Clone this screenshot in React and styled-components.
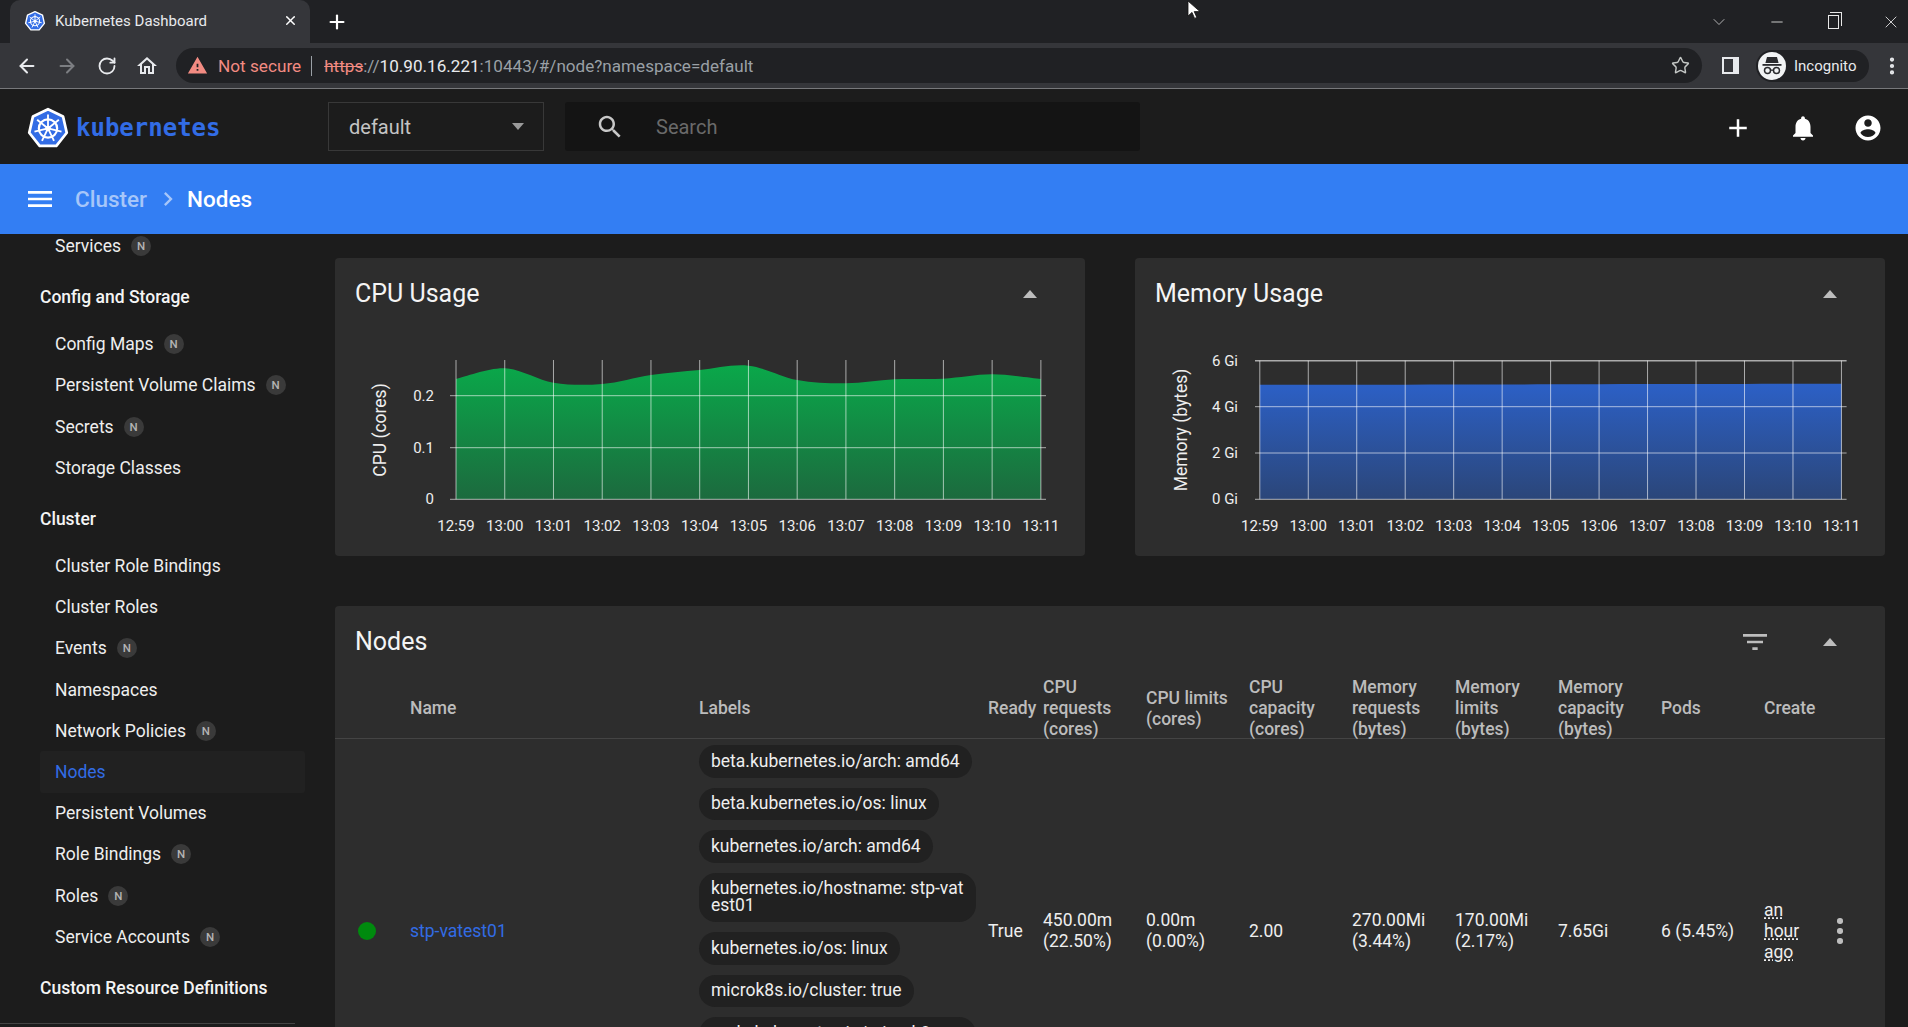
import styled, { createGlobalStyle } from 'styled-components';
import { ArrowLeft, ArrowRight, RotateCw, Star, ChevronDown, Minus, X, Plus, MoreVertical } from 'lucide-react';

const GlobalStyle = createGlobalStyle`
    html, body {
        margin: 0;
        height: 100%;
        background: #1c1c1c;
        font-family: Roboto, "Liberation Sans", sans-serif;
    }
    * {
        box-sizing: border-box;
    }
`;

const icons = {
    menu: 'M3 18h18v-2H3v2zm0-5h18v-2H3v2zm0-7v2h18V6H3z',
    add: 'M19 13h-6v6h-2v-6H5v-2h6V5h2v6h6v2z',
    bell: 'M12 22c1.1 0 2-.9 2-2h-4c0 1.1.89 2 2 2zm6-6v-5c0-3.07-1.64-5.64-4.5-6.32V4c0-.83-.67-1.5-1.5-1.5s-1.5.67-1.5 1.5v.68C7.63 5.36 6 7.92 6 11v5l-2 2v1h16v-1l-2-2z',
    account: 'M12 2C6.48 2 2 6.48 2 12s4.48 10 10 10 10-4.48 10-10S17.52 2 12 2zm0 3c1.66 0 3 1.34 3 3s-1.34 3-3 3-3-1.34-3-3 1.34-3 3-3zm0 14.2c-2.5 0-4.71-1.28-6-3.22.03-1.99 4-3.08 6-3.08 1.99 0 5.97 1.09 6 3.08-1.29 1.94-3.5 3.22-6 3.22z',
    search: 'M15.5 14h-.79l-.28-.27C15.41 12.59 16 11.11 16 9.5 16 5.91 13.09 3 9.5 3S3 5.91 3 9.5 5.91 16 9.5 16c1.61 0 3.09-.59 4.23-1.57l.27.28v.79l5 4.99L20.49 19l-4.99-5zm-6 0C7.01 14 5 11.99 5 9.5S7.01 5 9.5 5 14 7.01 14 9.5 11.99 14 9.5 14z',
    filter: 'M10 18h4v-2h-4v2zM3 6v2h18V6H3zm3 7h12v-2H6v2z',
    home: 'M12 5.69l5 4.5V18h-2v-6H9v6H7v-7.81l5-4.5M12 3L2 12h3v8h6v-6h2v6h6v-8h3L12 3z',
    chevron: 'M8.59 16.59L13.17 12 8.59 7.41 10 6l6 6-6 6z',
    warning: 'M1 21h22L12 2 1 21zm12-3h-2v-2h2v2zm0-4h-2v-4h2v4z',
};

function MatIcon({ name, size = 24, color = '#fff' }) {
    return (
        <svg width={size} height={size} viewBox="0 0 24 24" fill={color}>
            <path d={icons[name]} />
        </svg>
    );
}

function K8sLogo({ size }) {
    const pts = [0, 1, 2, 3, 4, 5, 6].map((k) => {
        const a = (-90 + (k * 360) / 7) * (Math.PI / 180);
        return [24 + 21 * Math.cos(a), 24.5 + 21 * Math.sin(a)];
    });
    return (
        <svg width={size} height={size} viewBox="0 0 48 48">
            <polygon points={pts.map((p) => p.join(',')).join(' ')} fill="#326ce5" stroke="#fff" strokeWidth="3" strokeLinejoin="round" />
            <circle cx="24" cy="24.5" r="10" fill="none" stroke="#fff" strokeWidth="2.4" />
            {pts.map((p, i) => (
                <line key={i} x1="24" y1="24.5" x2={24 + (p[0] - 24) * 0.72} y2={24.5 + (p[1] - 24.5) * 0.72} stroke="#fff" strokeWidth="2" />
            ))}
            <circle cx="24" cy="24.5" r="3" fill="#fff" />
        </svg>
    );
}

const smooth = (p) => {
    let d = `M${p[0][0]} ${p[0][1]}`;
    for (let i = 0; i < p.length - 1; i++) {
        const a = p[i - 1] || p[i];
        const b = p[i];
        const c = p[i + 1];
        const e = p[i + 2] || c;
        d += ` C${b[0] + (c[0] - a[0]) / 6} ${b[1] + (c[1] - a[1]) / 6} ${c[0] - (e[0] - b[0]) / 6} ${c[1] - (e[1] - b[1]) / 6} ${c[0]} ${c[1]}`;
    }
    return d;
};

const times = ['12:59', '13:00', '13:01', '13:02', '13:03', '13:04', '13:05', '13:06', '13:07', '13:08', '13:09', '13:10', '13:11'];

function Chart({ id, view, left, step, top, bottom, tickLeft, tickRight, labelEnd, axisX, axis, yTicks, values, from, to }) {
    const points = values.map((y, i) => [left + i * step, y]);
    const right = left + 12 * step;
    return (
        <ChartSvg viewBox={view} width="750" height="216">
            <defs>
                <linearGradient id={id} x1="0" y1="0" x2="0" y2="1">
                    <stop offset="0" stopColor={from} />
                    <stop offset="1" stopColor={to} />
                </linearGradient>
            </defs>
            <path d={`${smooth(points)} L${right} ${bottom} L${left} ${bottom} Z`} fill={`url(#${id})`} />
            {times.map((t, i) => (
                <g key={t}>
                    <line x1={left + i * step} x2={left + i * step} y1={top} y2={bottom} stroke="#fff" strokeOpacity="0.6" strokeWidth="1" />
                    <text x={left + i * step} y="531" fontSize="15" fill="#eee" textAnchor="middle">{t}</text>
                </g>
            ))}
            {yTicks.map((t) => (
                <g key={t.label}>
                    <line x1={tickLeft} x2={tickRight} y1={t.y} y2={t.y} stroke="#fff" strokeOpacity="0.6" strokeWidth={t.strong ? 1.6 : 1} />
                    <text x={labelEnd} y={t.y + 5} fontSize="15" fill="#eee" textAnchor="end">{t.label}</text>
                </g>
            ))}
            <text transform={`translate(${axisX} 430) rotate(-90)`} fontSize="17.5" fill="#eee" textAnchor="middle">{axis}</text>
        </ChartSvg>
    );
}

const sidebar = [
    { text: 'Services', ns: true },
    { head: 'Config and Storage' },
    { text: 'Config Maps', ns: true },
    { text: 'Persistent Volume Claims', ns: true },
    { text: 'Secrets', ns: true },
    { text: 'Storage Classes' },
    { head: 'Cluster' },
    { text: 'Cluster Role Bindings' },
    { text: 'Cluster Roles' },
    { text: 'Events', ns: true },
    { text: 'Namespaces' },
    { text: 'Network Policies', ns: true },
    { text: 'Nodes', active: true },
    { text: 'Persistent Volumes' },
    { text: 'Role Bindings', ns: true },
    { text: 'Roles', ns: true },
    { text: 'Service Accounts', ns: true },
    { head: 'Custom Resource Definitions' },
];

const labels = [
    'beta.kubernetes.io/arch: amd64',
    'beta.kubernetes.io/os: linux',
    'kubernetes.io/arch: amd64',
    'kubernetes.io/hostname: stp-vatest01',
    'kubernetes.io/os: linux',
    'microk8s.io/cluster: true',
    'node.kubernetes.io/microk8s-worker: microk8s-worker',
];

const headers = ['', 'Name', 'Labels', 'Ready', 'CPU requests (cores)', 'CPU limits (cores)', 'CPU capacity (cores)', 'Memory requests (bytes)', 'Memory limits (bytes)', 'Memory capacity (bytes)', 'Pods', 'Create', ''];

const values = ['450.00m (22.50%)', '0.00m (0.00%)', '2.00', '270.00Mi (3.44%)', '170.00Mi (2.17%)', '7.65Gi', '6 (5.45%)'];

function App() {
    return (
        <Page>
            <GlobalStyle />
            <TabStrip>
                <Tab>
                    <K8sLogo size={22} />
                    <TabTitle>Kubernetes Dashboard</TabTitle>
                    <X size={15} color="#fff" strokeWidth={2.4} />
                </Tab>
                <NewTab><Plus size={22} color="#fff" strokeWidth={2.4} /></NewTab>
                <Cursor width="14" height="20" viewBox="0 0 14 20">
                    <path d="M1 1v15l4-3.6 2.6 6 2.2-1-2.6-5.8H13z" fill="#fff" stroke="#111" strokeWidth="0.8" />
                </Cursor>
                <WindowButtons>
                    <ChevronDown size={20} color="#ccc" strokeWidth={1} />
                    <Minus size={18} color="#ddd" strokeWidth={1.2} />
                    <RestoreIcon />
                    <X size={20} color="#ddd" strokeWidth={1.1} />
                </WindowButtons>
            </TabStrip>
            <ToolBar>
                <NavButtons>
                    <ArrowLeft size={22} color="#e8eaed" strokeWidth={2.2} />
                    <ArrowRight size={22} color="#7c7e82" strokeWidth={2.2} />
                    <RotateCw size={20} color="#e8eaed" strokeWidth={2.2} />
                    <MatIcon name="home" size={24} color="#e8eaed" />
                </NavButtons>
                <AddressBar>
                    <MatIcon name="warning" size={21} color="#f28b82" />
                    <NotSecure>Not secure</NotSecure>
                    <UrlDivider />
                    <Url>
                        <Https>https</Https>://<Host>10.90.16.221</Host>:10443/#/node?namespace=default
                    </Url>
                    <BookmarkStar><Star size={19} color="#c4c7c5" strokeWidth={1.8} /></BookmarkStar>
                </AddressBar>
                <SidePanelIcon />
                <ProfilePill>
                    <IncognitoBadge>
                        <svg width="22" height="20" viewBox="0 0 22 20" fill="#2a2b2e">
                            <path d="M6 1h10l1.6 6H4.4z" />
                            <rect x="1.5" y="8" width="19" height="1.8" />
                            <circle cx="6.5" cy="14.5" r="3" fill="none" stroke="#2a2b2e" strokeWidth="1.5" />
                            <circle cx="15.5" cy="14.5" r="3" fill="none" stroke="#2a2b2e" strokeWidth="1.5" />
                            <rect x="9.5" y="13.5" width="3" height="1.3" />
                        </svg>
                    </IncognitoBadge>
                    Incognito
                </ProfilePill>
                <MoreVertical size={22} color="#e8eaed" strokeWidth={2.6} />
            </ToolBar>
            <Header>
                <Brand>
                    <K8sLogo size={44} />
                    <BrandName>kubernetes</BrandName>
                </Brand>
                <NamespaceSelect>
                    <span>default</span>
                    <SelectCaret />
                </NamespaceSelect>
                <SearchBox>
                    <MatIcon name="search" size={30} color="#c8c8c8" />
                    <SearchText>Search</SearchText>
                </SearchBox>
                <HeaderActions>
                    <MatIcon name="add" size={30} />
                    <MatIcon name="bell" size={30} />
                    <MatIcon name="account" size={30} />
                </HeaderActions>
            </Header>
            <TitleBar>
                <MatIcon name="menu" size={32} />
                <Crumb>Cluster</Crumb>
                <MatIcon name="chevron" size={28} color="#a6c6f9" />
                <Crumb $current>Nodes</Crumb>
            </TitleBar>
            <Body>
                <Sidebar>
                    <NavList>
                        {sidebar.map((item) =>
                            item.head ? (
                                <NavHead key={item.head}>{item.head}</NavHead>
                            ) : (
                                <NavItem key={item.text} $active={item.active}>
                                    {item.text}
                                    {item.ns && <NsBadge>N</NsBadge>}
                                </NavItem>
                            )
                        )}
                    </NavList>
                    <NavDivider />
                </Sidebar>
                <Main>
                    <ChartRow>
                        <Card>
                            <CardHeader>
                                <CardTitle>CPU Usage</CardTitle>
                                <CardTools><Caret /></CardTools>
                            </CardHeader>
                            <Chart
                                id="cpu"
                                view="335 340 750 216"
                                left={456}
                                step={48.74}
                                top={360}
                                bottom={499.3}
                                tickLeft={450}
                                tickRight={1046}
                                labelEnd={434}
                                axisX={385.5}
                                axis="CPU (cores)"
                                from="#0aa84a"
                                to="#1c6a3e"
                                yTicks={[
                                    { label: '0.2', y: 395.7 },
                                    { label: '0.1', y: 447.7 },
                                    { label: '0', y: 499.3 },
                                ]}
                                values={[379, 368.3, 382.7, 384, 375, 370, 365.7, 380, 383.3, 379.3, 378.7, 374.3, 379]}
                            />
                        </Card>
                        <Card>
                            <CardHeader>
                                <CardTitle>Memory Usage</CardTitle>
                                <CardTools><Caret /></CardTools>
                            </CardHeader>
                            <Chart
                                id="memory"
                                view="1135 340 750 216"
                                left={1259.8}
                                step={48.47}
                                top={360.7}
                                bottom={499.3}
                                tickLeft={1255}
                                tickRight={1846.6}
                                labelEnd={1238}
                                axisX={1186.5}
                                axis="Memory (bytes)"
                                from="#2c60c6"
                                to="#2b4679"
                                yTicks={[
                                    { label: '6 Gi', y: 360.7, strong: true },
                                    { label: '4 Gi', y: 406.7 },
                                    { label: '2 Gi', y: 453 },
                                    { label: '0 Gi', y: 499.3 },
                                ]}
                                values={[384.7, 384.7, 384.7, 384.7, 384.6, 384.5, 384.3, 384.2, 384, 384, 384, 383.8, 383.7]}
                            />
                        </Card>
                    </ChartRow>
                    <NodesCard>
                        <CardHeader>
                            <CardTitle>Nodes</CardTitle>
                            <CardTools>
                                <MatIcon name="filter" size={32} color="#bdbdbd" />
                                <Caret />
                            </CardTools>
                        </CardHeader>
                        <TableHead>
                            {headers.map((h, i) => (
                                <HeadCell key={i}>{h}</HeadCell>
                            ))}
                        </TableHead>
                        <TableRow>
                            <Cell><StatusDot /></Cell>
                            <Cell><NodeLink>stp-vatest01</NodeLink></Cell>
                            <LabelCell>
                                {labels.map((l) => (
                                    <Chip key={l}>{l}</Chip>
                                ))}
                            </LabelCell>
                            <Cell>True</Cell>
                            {values.map((v) => (
                                <Cell key={v}>{v}</Cell>
                            ))}
                            <Cell><Age>an hour ago</Age></Cell>
                            <Cell><Kebab><span /><span /><span /></Kebab></Cell>
                        </TableRow>
                    </NodesCard>
                </Main>
            </Body>
        </Page>
    );
}

const Page = styled.div`
    height: 100vh;
    display: flex;
    flex-direction: column;
    overflow: hidden;
    background: #1c1c1c;
`;

const TabStrip = styled.div`
    position: relative;
    height: 43px;
    flex: none;
    display: flex;
    align-items: flex-end;
    padding-left: 10px;
    background: #202124;
`;

const Tab = styled.div`
    width: 300px;
    height: 43px;
    display: flex;
    align-items: center;
    padding: 0 12px 2px 14px;
    background: #35363a;
    border-radius: 10px 10px 0 0;
    color: #e8eaed;
`;

const TabTitle = styled.span`
    flex: 1;
    margin-left: 9px;
    font-size: 15px;
`;

const NewTab = styled.div`
    display: flex;
    align-self: center;
    margin-left: 16px;
`;

const Cursor = styled.svg`
    position: absolute;
    left: 1187px;
    top: 0;
`;

const WindowButtons = styled.div`
    margin-left: auto;
    align-self: center;
    padding-right: 7px;
    display: flex;
    align-items: center;
    gap: 42px;
    svg:first-child {
        margin-right: -3px;
    }
`;

const RestoreIcon = styled.span`
    position: relative;
    width: 11px;
    height: 14px;
    border: 1.3px solid #e8e8e8;
    &::before {
        content: '';
        position: absolute;
        left: 1px;
        top: -4px;
        width: 11px;
        height: 13px;
        border-top: 1.3px solid #e8e8e8;
        border-right: 1.3px solid #e8e8e8;
    }
`;

const ToolBar = styled.div`
    height: 46px;
    flex: none;
    display: flex;
    align-items: center;
    padding-right: 5px;
    background: #35363a;
    border-bottom: 1px solid #77787b;
`;

const NavButtons = styled.div`
    width: 176px;
    padding: 0 17px 0 16px;
    display: flex;
    justify-content: space-between;
    align-items: center;
`;

const AddressBar = styled.div`
    width: 1526px;
    height: 35px;
    display: flex;
    align-items: center;
    padding: 0 12px 0 11px;
    background: #202124;
    border-radius: 18px;
    font-size: 17.1px;
`;

const NotSecure = styled.span`
    margin-left: 10px;
    color: #f28b82;
    font-size: 17.2px;
`;

const UrlDivider = styled.span`
    width: 1px;
    height: 20px;
    margin: 0 12px 0 10px;
    background: #9aa0a6;
`;

const Url = styled.span`
    color: #9aa0a6;
`;

const Https = styled.span`
    color: #f28b82;
    text-decoration: line-through;
`;

const Host = styled.span`
    color: #e8eaed;
`;

const BookmarkStar = styled.span`
    display: flex;
    margin-left: auto;
`;

const SidePanelIcon = styled.span`
    width: 17px;
    height: 17px;
    margin-left: 20px;
    border: 2px solid #e8eaed;
    border-right-width: 6px;
`;

const ProfilePill = styled.div`
    width: 113px;
    height: 32px;
    margin: 0 12px 0 17px;
    display: flex;
    align-items: center;
    gap: 8px;
    background: #202124;
    border-radius: 16px;
    color: #e8eaed;
    font-size: 15px;
`;

const IncognitoBadge = styled.span`
    width: 28px;
    height: 28px;
    margin-left: 2px;
    display: flex;
    align-items: center;
    justify-content: center;
    background: #f1f3f4;
    border-radius: 50%;
`;

const Header = styled.header`
    height: 75px;
    flex: none;
    display: flex;
    align-items: center;
    background: #1c1c1c;
`;

const Brand = styled.div`
    width: 328px;
    padding: 2px 0 0 26px;
    display: flex;
    align-items: center;
    gap: 6px;
`;

const BrandName = styled.span`
    font-family: "DejaVu Sans Mono", monospace;
    font-size: 24px;
    font-weight: 700;
    color: #326ce5;
`;

const NamespaceSelect = styled.div`
    width: 216px;
    height: 49px;
    display: flex;
    align-items: center;
    justify-content: space-between;
    padding: 0 19px 0 20px;
    border: 1px solid #383838;
    color: #c4c4c4;
    font-size: 20px;
`;

const SelectCaret = styled.span`
    border: 6px solid transparent;
    border-top: 7px solid #9a9a9a;
    border-bottom: 0;
`;

const SearchBox = styled.div`
    width: 575px;
    height: 49px;
    margin-left: 21px;
    display: flex;
    align-items: center;
    gap: 31px;
    padding-left: 30px;
    background: #141414;
    border-radius: 3px;
`;

const SearchText = styled.span`
    color: #6a6a6a;
    font-size: 20px;
`;

const HeaderActions = styled.div`
    margin-left: auto;
    padding: 2px 25px 0 0;
    display: flex;
    align-items: center;
    gap: 35px;
`;

const TitleBar = styled.div`
    height: 70px;
    flex: none;
    display: flex;
    align-items: center;
    padding-left: 24px;
    background: #337ef3;
`;

const Crumb = styled.span`
    margin-left: ${(p) => (p.$current ? '5px' : '19px')};
    margin-right: 7px;
    color: ${(p) => (p.$current ? '#fff' : '#a6c6f9')};
    font-size: 22.5px;
    font-weight: 500;
`;

const Body = styled.div`
    flex: 1;
    min-height: 0;
    display: flex;
    overflow: hidden;
`;

const Sidebar = styled.aside`
    width: 305px;
    flex: none;
    overflow: hidden;
`;

const NavList = styled.div`
    margin-top: -8.5px;
    padding-left: 40px;
`;

const NavHead = styled.div`
    height: 41px;
    margin: 10px 0 6px;
    display: flex;
    align-items: center;
    color: #f4f4f4;
    font-size: 17.5px;
    font-weight: 500;
`;

const NavItem = styled.div`
    height: 41.2px;
    padding-left: 15px;
    display: flex;
    align-items: center;
    background: ${(p) => (p.$active ? '#212121' : 'transparent')};
    border-radius: 3px;
    color: ${(p) => (p.$active ? '#326ce5' : '#eeeeee')};
    font-size: 17.5px;
`;

const NsBadge = styled.span`
    width: 20px;
    height: 20px;
    margin-left: 10px;
    display: flex;
    align-items: center;
    justify-content: center;
    background: #3a3a3a;
    border-radius: 50%;
    color: #b4b4b4;
    font-size: 11.5px;
    font-weight: 500;
`;

const NavDivider = styled.div`
    width: 295px;
    margin-top: 15px;
    border-top: 1px solid #444;
`;

const Main = styled.main`
    flex: 1;
    min-width: 0;
    padding: 24px 23px 0 30px;
`;

const ChartRow = styled.div`
    display: grid;
    grid-template-columns: 750px 750px;
    gap: 50px;
`;

const Card = styled.section`
    height: 298px;
    background: #2d2d2d;
    border-radius: 4px;
`;

const NodesCard = styled(Card)`
    height: auto;
    margin-top: 50px;
`;

const CardHeader = styled.div`
    height: 71px;
    display: flex;
    align-items: center;
    padding: 0 48px 0 20px;
`;

const CardTitle = styled.h2`
    margin: 0;
    color: #f4f4f4;
    font-size: 25px;
    font-weight: 400;
`;

const CardTools = styled.div`
    margin-left: auto;
    display: flex;
    align-items: center;
    gap: 52px;
`;

const Caret = styled.span`
    border: 7px solid transparent;
    border-bottom: 8px solid #bdbdbd;
    border-top: 0;
`;

const ChartSvg = styled.svg`
    display: block;
    margin-top: 11px;
    font-family: Roboto, sans-serif;
`;

const columns = '75px 289px 289px 55px repeat(7, 103px) 60px 1fr';

const TableHead = styled.div`
    height: 62px;
    display: grid;
    grid-template-columns: ${columns};
    align-items: center;
    padding-bottom: 1px;
    border-bottom: 1px solid #444;
`;

const HeadCell = styled.div`
    padding-right: 8px;
    color: #bcbcbc;
    font-size: 17.5px;
    font-weight: 500;
    line-height: 21px;
    &:nth-child(4) {
        padding-right: 0;
    }
`;

const TableRow = styled.div`
    height: 384px;
    display: grid;
    grid-template-columns: ${columns};
    align-items: center;
`;

const Cell = styled.div`
    padding-right: 8px;
    color: #eeeeee;
    font-size: 17.5px;
    line-height: 21px;
`;

const StatusDot = styled.span`
    display: block;
    width: 18px;
    height: 18px;
    margin-left: 23px;
    background: #008a0e;
    border-radius: 50%;
`;

const NodeLink = styled.span`
    color: #326ce5;
`;

const LabelCell = styled.div`
    align-self: start;
    padding-top: 6px;
    display: flex;
    flex-direction: column;
    align-items: flex-start;
    gap: 10px;
`;

const Chip = styled.span`
    max-width: 277px;
    padding: 7.75px 12px;
    background: #212121;
    border-radius: 17px;
    color: #eeeeee;
    font-size: 17.5px;
    line-height: 17px;
    word-break: break-all;
`;

const Age = styled.span`
    display: block;
    width: 42px;
    text-decoration: underline dotted;
    text-underline-offset: 2px;
`;

const Kebab = styled.div`
    width: 32px;
    display: flex;
    flex-direction: column;
    align-items: center;
    gap: 4.5px;
    span {
        width: 5.5px;
        height: 5.5px;
        background: #bdbdbd;
        border-radius: 50%;
    }
`;

export default App;
